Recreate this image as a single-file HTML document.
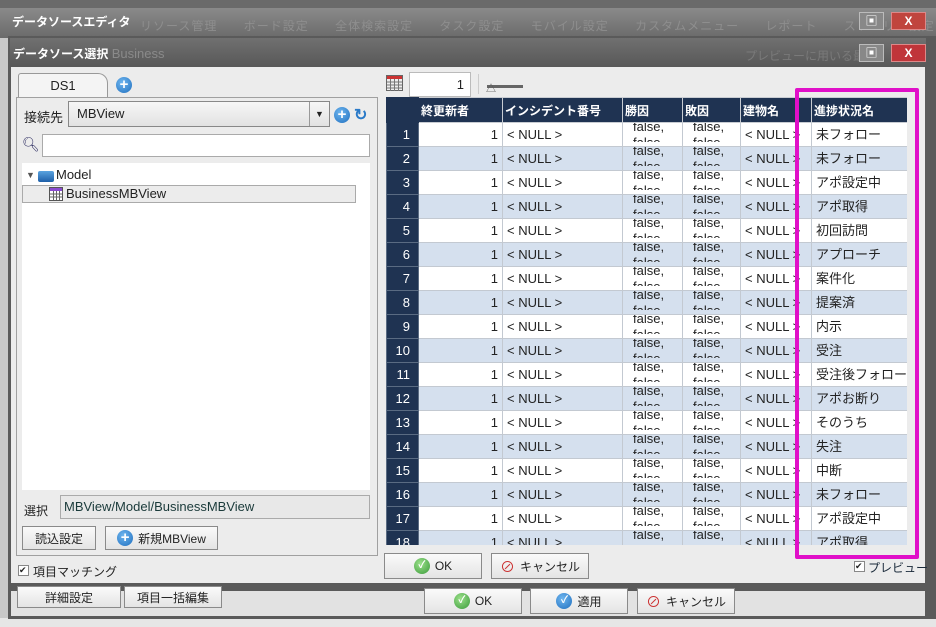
<!DOCTYPE html>
<html><head><meta charset="utf-8"><style>
*{box-sizing:border-box;margin:0;padding:0}
body{width:936px;height:627px;overflow:hidden;position:relative;background:#e6e6e6;font-family:"Liberation Sans","Noto Sans CJK JP",sans-serif;font-size:12px;color:#222}
.a{position:absolute}
.btn{position:absolute;border:1px solid #8a8a8a;background:linear-gradient(#fafafa,#e4e4e4);font-size:12px;display:flex;align-items:center;justify-content:center;gap:5px;color:#222}
.plus{display:inline-block;width:16px;height:16px;border-radius:50%;background:radial-gradient(circle at 40% 35%,#6fb6ef,#1f6fbf);color:#fff;font-weight:bold;font-size:15px;line-height:16px;text-align:center}
table{border-collapse:collapse;table-layout:fixed}
td{height:24px;border:1px solid #c3c9d1;font-size:13px;padding:0 4px;white-space:nowrap;overflow:hidden;line-height:14px;background:#fff}
th{height:25px;background:#1f3352;color:#fff;font-size:12px;text-align:left;padding:0 2px;border:1px solid #c8ccd2;font-weight:bold}
td.n{background:#1f3352;color:#fff;text-align:right;padding-right:8px;font-size:13px;border-color:#5a6b82}
tr:nth-child(odd) td:not(.n){background:#d5e0ee}
td.f{padding:0 0 0 10px;vertical-align:top}
td.f div{height:23px;overflow:hidden;font-size:13px;line-height:16px;margin-top:-4px}
</style></head><body>
<div class="a" style="left:0;top:0;width:936px;height:10px;background:#6a6a6a"></div>
<div class="a" style="left:0;top:8px;width:936px;height:30px;background:linear-gradient(#8a8a8a,#6a6a6a)"></div>
<div class="a" style="left:12px;top:13px;color:#fff;font-size:12px;font-weight:bold">データソースエディタ</div>
<div class="a" style="left:140px;top:17px;color:#8e8e8e;font-size:12px;letter-spacing:1px;word-spacing:22px">リソース管理 ボード設定 全体検索設定 タスク設定 モバイル設定 カスタムメニュー レポート ストーリー設定 リア</div>
<div class="a" style="left:859px;top:12px;width:25px;height:18px;background:#888;border:1px solid #bbb;color:#fff;text-align:center;font-size:12px;line-height:16px">▣</div>
<div class="a" style="left:891px;top:12px;width:35px;height:18px;background:#c0453e;border:1px solid #d88;color:#fff;text-align:center;font-weight:bold;line-height:16px">X</div>
<div class="a" style="left:0;top:38px;width:10px;height:580px;background:#c8c8c8"></div>
<div class="a" style="left:8px;top:36px;width:928px;height:555px;background:#5a5a5a"></div>
<div class="a" style="left:10px;top:38px;width:916px;height:29px;background:linear-gradient(#707070,#585858)"></div>
<div class="a" style="left:13px;top:45px;color:#fff;font-size:12px;font-weight:bold">データソース選択 <span style="color:#8a8a8a;font-weight:normal;font-size:13px">Business</span></div>
<div class="a" style="left:745px;top:47px;color:#7a7a7a;font-size:12px">プレビューに用いる最大</div>
<div class="a" style="left:859px;top:44px;width:25px;height:18px;background:#888;border:1px solid #bbb;color:#fff;text-align:center;line-height:16px">▣</div>
<div class="a" style="left:891px;top:44px;width:35px;height:18px;background:#c0353a;border:1px solid #d88;color:#fff;text-align:center;font-weight:bold;line-height:16px">X</div>
<div class="a" style="left:11px;top:67px;width:914px;height:516px;background:#ececec"></div>
<div class="a" style="left:8px;top:591px;width:928px;height:27px;background:#e2e2e2"></div>
<div class="a" style="left:8px;top:616px;width:928px;height:3px;background:#5a5a5a"></div>
<div class="a" style="left:8px;top:583px;width:3px;height:36px;background:#5a5a5a"></div>
<div class="a" style="left:925px;top:583px;width:11px;height:36px;background:#5a5a5a"></div>
<div class="btn" style="left:17px;top:586px;width:104px;height:22px">詳細設定</div>
<div class="btn" style="left:124px;top:586px;width:98px;height:22px">項目一括編集</div>
<div class="btn" style="left:424px;top:588px;width:98px;height:26px"><span class="plus" style="background:radial-gradient(circle at 40% 35%,#9be08a,#3a9a3a);font-size:10px">✓</span>OK</div>
<div class="btn" style="left:530px;top:588px;width:98px;height:26px"><span class="plus" style="font-size:10px">✓</span>適用</div>
<div class="btn" style="left:637px;top:588px;width:98px;height:26px"><span style="color:#c33;font-size:15px">⊘</span>キャンセル</div>
<div class="a" style="left:18px;top:73px;width:90px;height:25px;background:#f4f4f4;border:1px solid #999;border-bottom:none;border-radius:3px 10px 0 0;text-align:center;line-height:24px;font-size:13px">DS1</div>
<span class="plus a" style="left:116px;top:77px">+</span>
<div class="a" style="left:16px;top:97px;width:362px;height:459px;border:1px solid #a0a0a0;background:#ececec"></div>
<div class="a" style="left:24px;top:107px;font-size:13px">接続先</div>
<div class="a" style="left:68px;top:101px;width:262px;height:26px;border:1px solid #888;background:linear-gradient(#f6f6f6,#e2e2e2);font-size:13px;line-height:24px;padding-left:8px">MBView<div class="a" style="right:0;top:0;width:20px;height:24px;border-left:1px solid #999;text-align:center;font-size:9px">▼</div></div>
<span class="plus a" style="left:334px;top:107px">+</span>
<div class="a" style="left:354px;top:105px;color:#2a7ac8;font-size:16px;font-weight:bold">↻</div>
<div class="a" style="left:22px;top:136px;font-size:14px;color:#336">🔍︎</div>
<div class="a" style="left:42px;top:134px;width:328px;height:23px;border:1px solid #aaa;background:#fff"></div>
<div class="a" style="left:22px;top:163px;width:348px;height:327px;background:#fff"></div>
<div class="a" style="left:26px;top:170px;font-size:9px;color:#555">▼</div>
<div class="a" style="left:38px;top:171px;width:16px;height:11px;background:linear-gradient(#5aa3e0,#1e5fa8);border-radius:2px"></div>
<div class="a" style="left:56px;top:167px;font-size:13px">Model</div>
<div class="a" style="left:22px;top:185px;width:334px;height:18px;background:#ececec;border:1px solid #aaa"></div>
<svg class="a" style="left:49px;top:187px" width="14" height="14"><rect x="0.5" y="0.5" width="13" height="13" fill="#fff" stroke="#555"/><rect x="1" y="1" width="12" height="3" fill="#8a4ad0"/><path d="M1 7H13M1 10H13M4.5 4V13M7.5 4V13M10.5 4V13" stroke="#666"/></svg>
<div class="a" style="left:66px;top:186px;font-size:13px">BusinessMBView</div>
<div class="a" style="left:24px;top:502px;font-size:12px">選択</div>
<div class="a" style="left:60px;top:495px;width:310px;height:24px;border:1px solid #aaa;background:#e8e8e8;font-size:13px;line-height:22px;padding-left:3px;color:#1a3a3a">MBView/Model/BusinessMBView</div>
<div class="btn" style="left:22px;top:526px;width:74px;height:24px">読込設定</div>
<div class="btn" style="left:105px;top:526px;width:113px;height:24px"><span class="plus">+</span>新規MBView</div>
<div class="a" style="left:18px;top:565px;width:11px;height:11px;border:1px solid #888;background:#fff;font-size:9px;line-height:9px">✔</div>
<div class="a" style="left:33px;top:563px;font-size:12px">項目マッチング</div>
<svg class="a" style="left:386px;top:75px" width="17" height="16"><rect x="0.5" y="0.5" width="16" height="15" fill="#eee" stroke="#666"/><rect x="1" y="1" width="15" height="3" fill="#c33"/><path d="M1 7H16M1 10H16M1 13H16M4.5 4V16M8.5 4V16M12.5 4V16" stroke="#777"/></svg>
<div class="a" style="left:409px;top:72px;width:62px;height:25px;border:1px solid #bbb;background:#fff;text-align:right;padding-right:6px;line-height:23px;font-size:13px">1</div>
<div class="a" style="left:478px;top:74px;width:1px;height:20px;background:#ccc"></div>
<div class="a" style="left:487px;top:85px;width:36px;height:3px;background:#666"></div>
<div class="a" style="left:486px;top:80px;font-size:10px;color:#555">△</div>
<div class="a" style="left:386px;top:97px;width:521px;height:448px;overflow:hidden;background:#1f3352">
<table style="width:521px">
<colgroup><col style="width:32px"><col style="width:84px"><col style="width:120px"><col style="width:60px"><col style="width:58px"><col style="width:71px"><col style="width:96px"></colgroup>
<tr><th style="border-color:#1f3352"></th><th>終更新者</th><th>インシデント番号</th><th>勝因</th><th>敗因</th><th>建物名</th><th>進捗状況名</th></tr>
<tr><td class="n">1</td><td style="text-align:right">1</td><td>&lt; NULL &gt;</td><td class="f"><div>false,<br>false.</div></td><td class="f"><div>false,<br>false.</div></td><td>&lt; NULL &gt;</td><td>未フォロー</td></tr>
<tr><td class="n">2</td><td style="text-align:right">1</td><td>&lt; NULL &gt;</td><td class="f"><div>false,<br>false.</div></td><td class="f"><div>false,<br>false.</div></td><td>&lt; NULL &gt;</td><td>未フォロー</td></tr>
<tr><td class="n">3</td><td style="text-align:right">1</td><td>&lt; NULL &gt;</td><td class="f"><div>false,<br>false.</div></td><td class="f"><div>false,<br>false.</div></td><td>&lt; NULL &gt;</td><td>アポ設定中</td></tr>
<tr><td class="n">4</td><td style="text-align:right">1</td><td>&lt; NULL &gt;</td><td class="f"><div>false,<br>false.</div></td><td class="f"><div>false,<br>false.</div></td><td>&lt; NULL &gt;</td><td>アポ取得</td></tr>
<tr><td class="n">5</td><td style="text-align:right">1</td><td>&lt; NULL &gt;</td><td class="f"><div>false,<br>false.</div></td><td class="f"><div>false,<br>false.</div></td><td>&lt; NULL &gt;</td><td>初回訪問</td></tr>
<tr><td class="n">6</td><td style="text-align:right">1</td><td>&lt; NULL &gt;</td><td class="f"><div>false,<br>false.</div></td><td class="f"><div>false,<br>false.</div></td><td>&lt; NULL &gt;</td><td>アプローチ</td></tr>
<tr><td class="n">7</td><td style="text-align:right">1</td><td>&lt; NULL &gt;</td><td class="f"><div>false,<br>false.</div></td><td class="f"><div>false,<br>false.</div></td><td>&lt; NULL &gt;</td><td>案件化</td></tr>
<tr><td class="n">8</td><td style="text-align:right">1</td><td>&lt; NULL &gt;</td><td class="f"><div>false,<br>false.</div></td><td class="f"><div>false,<br>false.</div></td><td>&lt; NULL &gt;</td><td>提案済</td></tr>
<tr><td class="n">9</td><td style="text-align:right">1</td><td>&lt; NULL &gt;</td><td class="f"><div>false,<br>false.</div></td><td class="f"><div>false,<br>false.</div></td><td>&lt; NULL &gt;</td><td>内示</td></tr>
<tr><td class="n">10</td><td style="text-align:right">1</td><td>&lt; NULL &gt;</td><td class="f"><div>false,<br>false.</div></td><td class="f"><div>false,<br>false.</div></td><td>&lt; NULL &gt;</td><td>受注</td></tr>
<tr><td class="n">11</td><td style="text-align:right">1</td><td>&lt; NULL &gt;</td><td class="f"><div>false,<br>false.</div></td><td class="f"><div>false,<br>false.</div></td><td>&lt; NULL &gt;</td><td>受注後フォロー</td></tr>
<tr><td class="n">12</td><td style="text-align:right">1</td><td>&lt; NULL &gt;</td><td class="f"><div>false,<br>false.</div></td><td class="f"><div>false,<br>false.</div></td><td>&lt; NULL &gt;</td><td>アポお断り</td></tr>
<tr><td class="n">13</td><td style="text-align:right">1</td><td>&lt; NULL &gt;</td><td class="f"><div>false,<br>false.</div></td><td class="f"><div>false,<br>false.</div></td><td>&lt; NULL &gt;</td><td>そのうち</td></tr>
<tr><td class="n">14</td><td style="text-align:right">1</td><td>&lt; NULL &gt;</td><td class="f"><div>false,<br>false.</div></td><td class="f"><div>false,<br>false.</div></td><td>&lt; NULL &gt;</td><td>失注</td></tr>
<tr><td class="n">15</td><td style="text-align:right">1</td><td>&lt; NULL &gt;</td><td class="f"><div>false,<br>false.</div></td><td class="f"><div>false,<br>false.</div></td><td>&lt; NULL &gt;</td><td>中断</td></tr>
<tr><td class="n">16</td><td style="text-align:right">1</td><td>&lt; NULL &gt;</td><td class="f"><div>false,<br>false.</div></td><td class="f"><div>false,<br>false.</div></td><td>&lt; NULL &gt;</td><td>未フォロー</td></tr>
<tr><td class="n">17</td><td style="text-align:right">1</td><td>&lt; NULL &gt;</td><td class="f"><div>false,<br>false.</div></td><td class="f"><div>false,<br>false.</div></td><td>&lt; NULL &gt;</td><td>アポ設定中</td></tr>
<tr><td class="n">18</td><td style="text-align:right">1</td><td>&lt; NULL &gt;</td><td class="f"><div>false,<br>false.</div></td><td class="f"><div>false,<br>false.</div></td><td>&lt; NULL &gt;</td><td>アポ取得</td></tr>
</table></div>
<div class="btn" style="left:384px;top:553px;width:98px;height:26px"><span class="plus" style="background:radial-gradient(circle at 40% 35%,#9be08a,#3a9a3a);font-size:10px">✓</span>OK</div>
<div class="btn" style="left:491px;top:553px;width:98px;height:26px"><span style="color:#c33;font-size:15px">⊘</span>キャンセル</div>
<div class="a" style="left:854px;top:561px;width:11px;height:11px;border:1px solid #888;background:#fff;font-size:9px;line-height:9px">✔</div>
<div class="a" style="left:868px;top:559px;font-size:12px;color:#1a2a3a">プレビュー</div>
<div class="a" style="left:795px;top:88px;width:124px;height:471px;border:4px solid #e010c8;border-radius:2px"></div>
</body></html>
